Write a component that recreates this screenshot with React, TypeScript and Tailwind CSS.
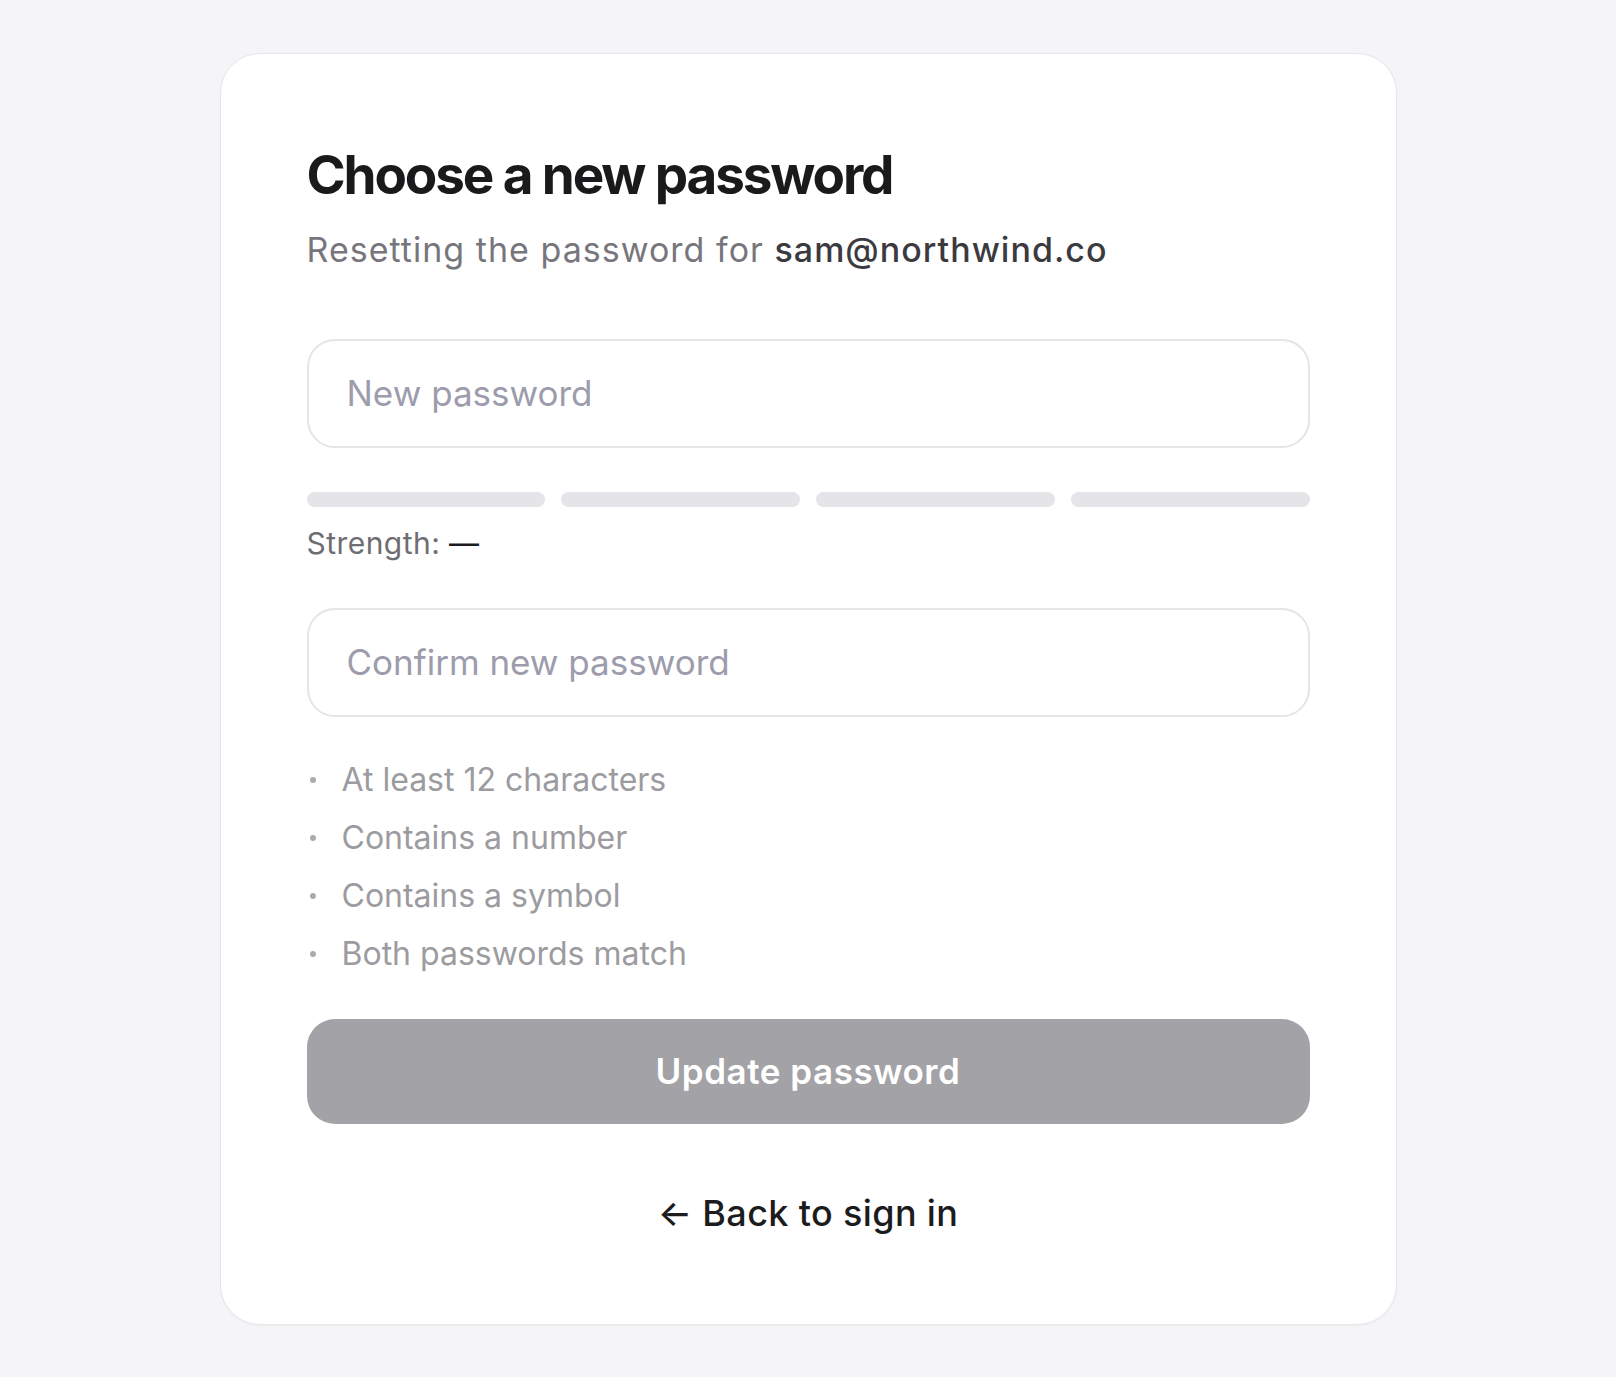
import { useState } from 'react';

const RULES = [
  'At least 12 characters',
  'Contains a number',
  'Contains a symbol',
  'Both passwords match'
];

export default function App() {
  const [password, setPassword] = useState('');
  const [confirm, setConfirm] = useState('');

  return (
    <div className="flex min-h-screen items-center justify-center bg-[#f5f4f7] font-['Inter','Liberation_Sans',sans-serif] antialiased">
      <div className="w-[1177px] rounded-[40px] border border-[#e7e6eb] bg-white px-[86px] pb-[87px] pt-[89px] shadow-[0_1px_2px_rgba(0,0,0,0.04)]">
        <h1 className="text-[53px] font-bold leading-[64px] tracking-[-0.04em] text-[#1a1a1c]">
          Choose a new password
        </h1>
        <p className="mt-[19px] text-[34px] leading-[48px] tracking-[0.03em] text-[#77767c]">
          Resetting the password for <span className="font-medium text-[#3b3a3f]">sam@northwind.co</span>
        </p>

        <input
          type="password"
          value={password}
          onChange={(e) => setPassword(e.target.value)}
          placeholder="New password"
          className="mt-[65px] block h-[109px] w-full rounded-[28px] border-2 border-[#e5e4e9] bg-transparent px-[38px] text-[35px] text-[#1a1a1c] outline-none placeholder:text-[#9d9cac]"
        />

        <div className="mt-[44px] grid grid-cols-4 gap-4">
          {[0, 1, 2, 3].map((i) => (
            <div key={i} className="h-[15px] rounded-full bg-[#e5e4e8]" />
          ))}
        </div>
        <p className="mt-[16px] text-[30px] leading-[40px] tracking-[0.015em] text-[#6e6d72]">
          Strength: <span className="text-[#1c1c1e]">—</span>
        </p>

        <input
          type="password"
          value={confirm}
          onChange={(e) => setConfirm(e.target.value)}
          placeholder="Confirm new password"
          className="mt-[45px] block h-[109px] w-full rounded-[28px] border-2 border-[#e5e4e9] bg-transparent px-[38px] text-[35px] text-[#1a1a1c] outline-none placeholder:text-[#9d9cac]"
        />

        <ul className="mt-[41px] flex flex-col gap-[14px]">
          {RULES.map((rule) => (
            <li key={rule} className="flex items-center text-[32px] leading-[44px] text-[#9c9ba0]">
              <span className="ml-[3px] mr-[26px] h-[6px] w-[6px] shrink-0 rounded-full bg-[#abaaaf]" />
              {rule}
            </li>
          ))}
        </ul>

        <button
          type="button"
          disabled
          className="mt-[43px] flex h-[105px] w-full items-center justify-center rounded-[28px] bg-[#a3a2a6] text-[35px] font-semibold tracking-[0.015em] text-white"
        >
          Update password
        </button>

        <div className="mt-[65px] flex justify-center">
          <button type="button" className="text-[36px] font-medium leading-[48px] tracking-[0.01em] text-[#1c1c1e]">
            ← Back to sign in
          </button>
        </div>
      </div>
    </div>
  );
}
